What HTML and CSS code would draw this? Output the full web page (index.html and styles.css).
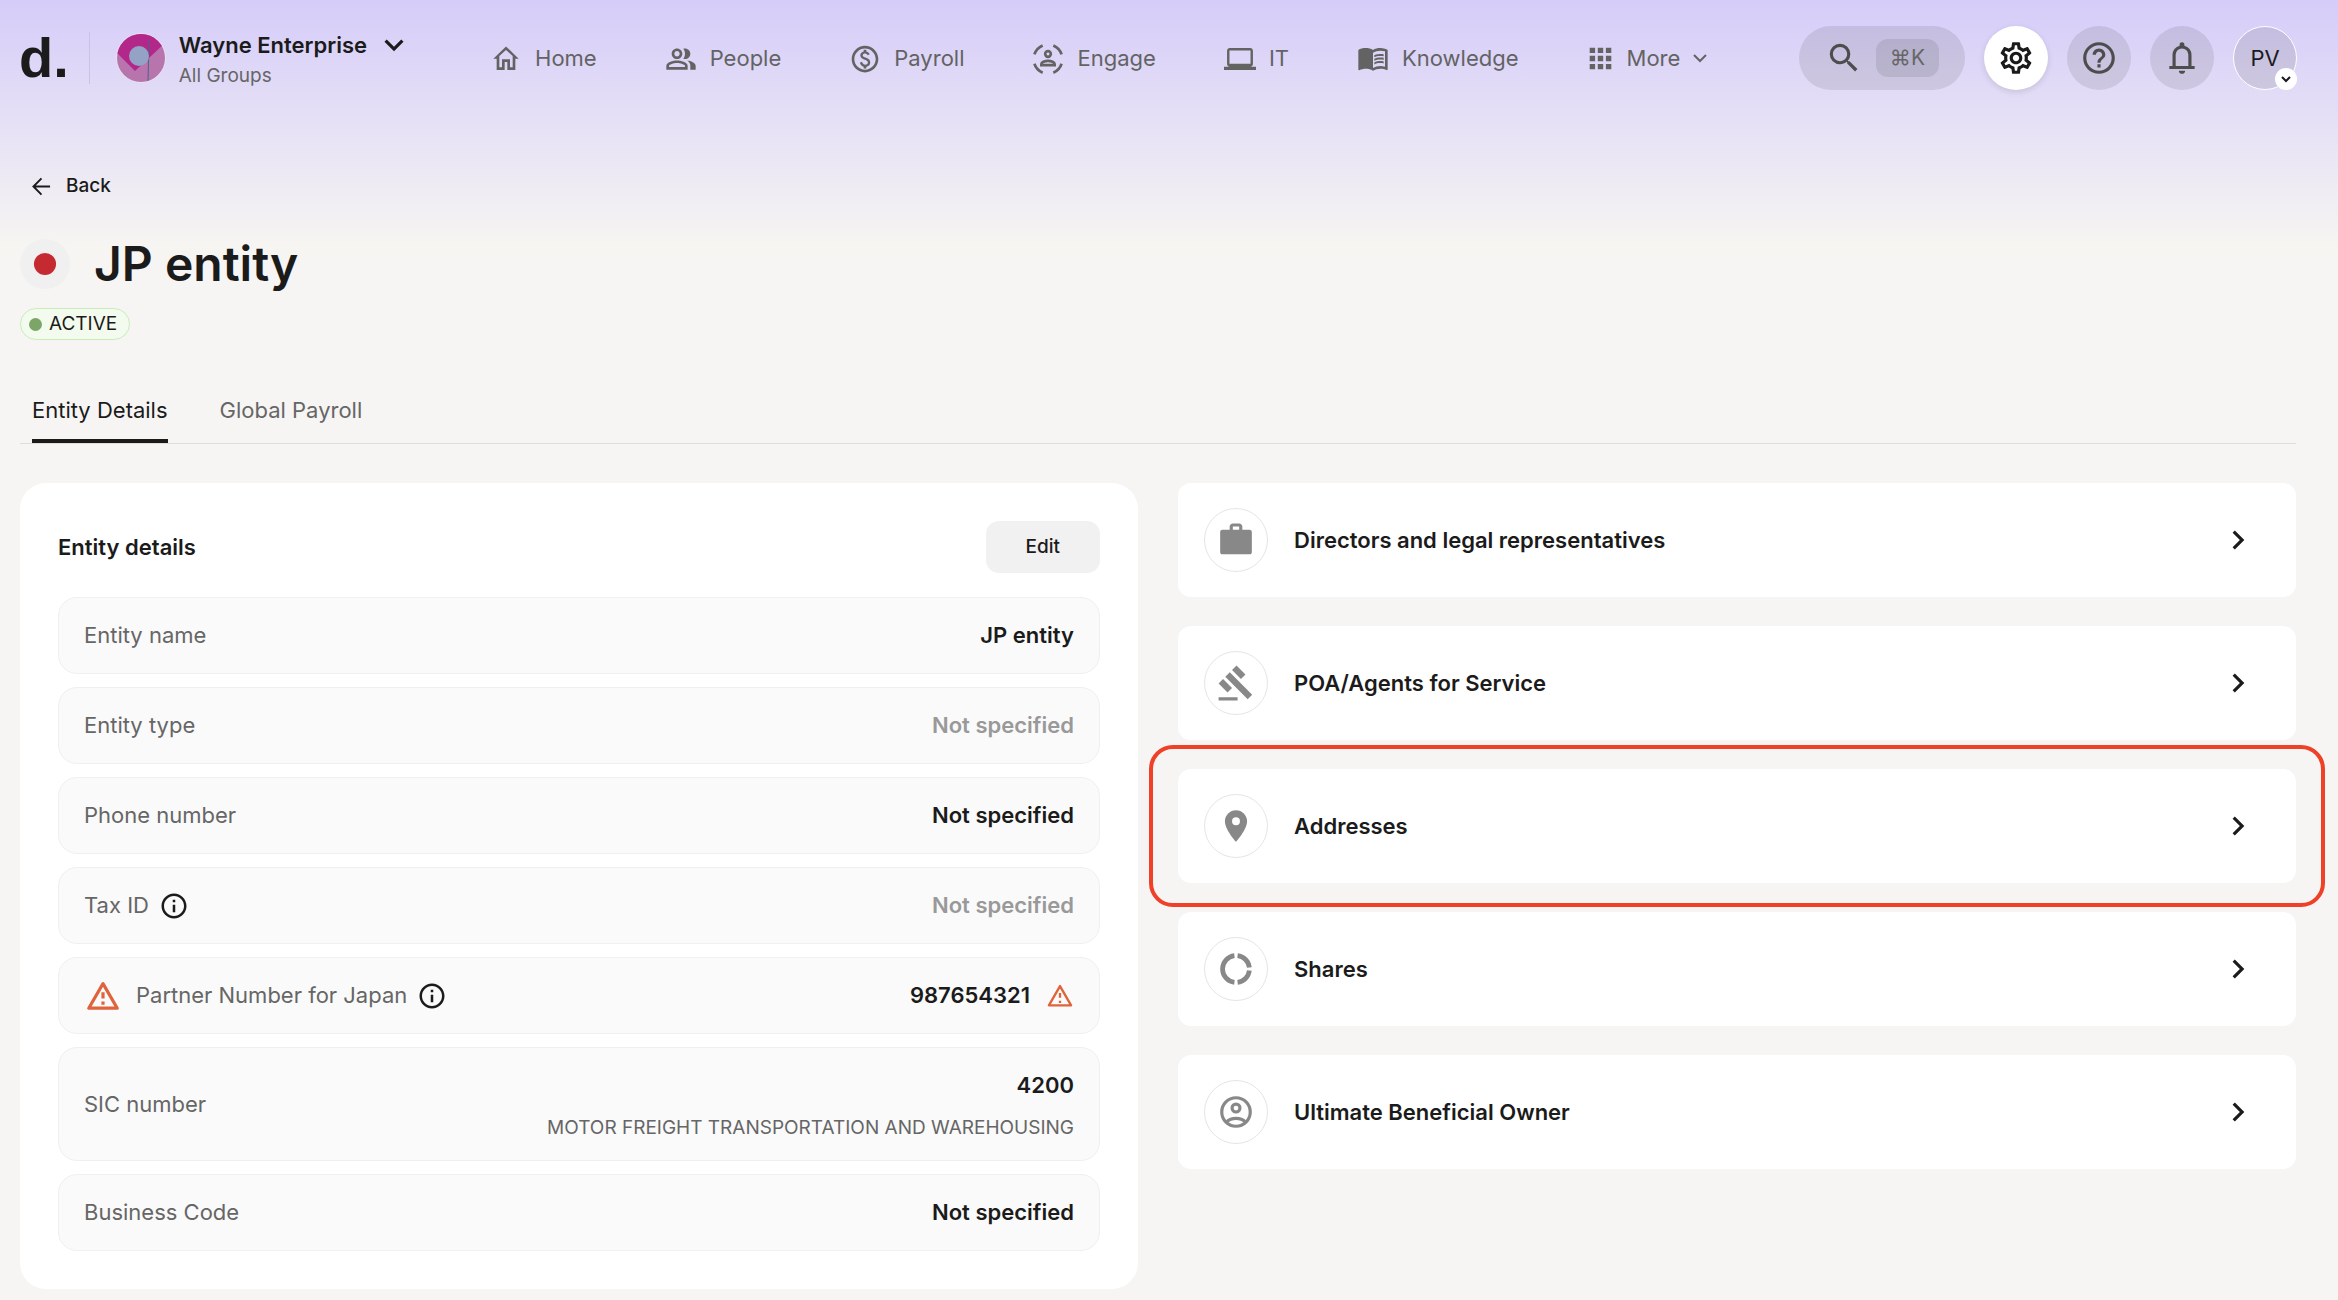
FILE: index.html
```html
<!DOCTYPE html>
<html lang="en">
<head>
<meta charset="utf-8">
<meta name="viewport" content="width=device-width, initial-scale=1">
<title>JP entity</title>
<link rel="stylesheet" href="styles.css">
</head>
<body>
<header class="topbar">
  <a class="logo" href="#">d.</a>
  <button class="org" type="button">
    <svg class="org-avatar" viewBox="0 0 50 50" aria-hidden="true">
      <clipPath id="disc"><circle cx="25" cy="25" r="24"/></clipPath>
      <circle cx="25" cy="25" r="25" fill="#e6e0f0"/>
      <g clip-path="url(#disc)">
        <path fill="#b774ad" d="M0 0h50v50H0z"/>
        <path fill="#b3278b" d="M0 0h50v9L19 38 0 19z"/>
        <path stroke="#4c6585" d="M33 7l-1 42"/>
        <circle cx="23" cy="23" r="10" fill="#93a2c5"/>
      </g>
    </svg>
    <span class="org-text">
      <span class="org-name">Wayne Enterprise</span>
      <span class="org-group">All Groups</span>
    </span>
    <svg class="icon-lg org-chevron" viewBox="0 0 24 24" aria-hidden="true"><path d="M7.41 8.59 12 13.17l4.59-4.58L18 10l-6 6-6-6z"/></svg>
  </button>

  <nav class="nav" aria-label="Main">
    <a class="nav-item" href="#"><svg class="icon" viewBox="0 0 24 24" aria-hidden="true"><path d="m12 6 5 4.5V19h-2v-6H9v6H7v-8.500l5-4.500M12 3.300 2.500 12.500h2.500V21h6v-6h2v6h6v-8.500h2.500z"/></svg>Home</a>
    <a class="nav-item" href="#"><svg class="icon" viewBox="0 0 24 24" aria-hidden="true"><path d="M16.67 13.93C18.04 14.86 19 16.12 19 17.8v3h4v-3c0-2.180-3.570-3.470-6.330-3.870zM15 12.800c2.210 0 4-1.790 4-4s-1.790-4-4-4c-.47 0-.91.1-1.330.24C14.500 6.070 15 7.380 15 8.800s-.5 2.730-1.330 3.760c.42.14.86.24 1.330.24zM9 12.800c2.210 0 4-1.790 4-4s-1.790-4-4-4-4 1.790-4 4 1.790 4 4 4zm0-6c1.100 0 2 .9 2 2s-.9 2-2 2-2-.9-2-2 .9-2 2-2zM9 13.800c-2.670 0-8 1.340-8 4v3h16v-3c0-2.660-5.330-4-8-4zm6 5H3v-.99C3.200 17.090 6.300 15.800 9 15.800s5.800 1.290 6 2v1z"/></svg>People</a>
    <a class="nav-item" href="#"><svg class="icon" viewBox="0 0 24 24" aria-hidden="true"><path transform="translate(0 .8)" d="M12 2C6.480 2 2 6.480 2 12s4.480 10 10 10 10-4.480 10-10S17.520 2 12 2zm0 18c-4.410 0-8-3.590-8-8s3.590-8 8-8 8 3.590 8 8-3.590 8-8 8zm.89-8.900c-1.780-.59-2.640-.96-2.640-1.900 0-1.020 1.110-1.390 1.810-1.390 1.310 0 1.790.99 1.900 1.340l1.580-.67c-.15-.45-.82-1.920-2.540-2.240V5h-2v1.260c-2.480.56-2.490 2.860-2.490 2.960 0 2.270 2.250 2.910 3.350 3.310 1.580.56 2.280 1.070 2.280 2.030 0 1.130-1.050 1.610-1.980 1.610-1.820 0-2.340-1.870-2.400-2.090l-1.660.67c.63 2.190 2.280 2.780 2.900 2.960V19h2v-1.240c.4-.09 2.900-.59 2.900-3.220 0-1.390-.61-2.610-3.010-3.440z"/></svg>Payroll</a>
    <a class="nav-item" href="#"><svg class="icon line" viewBox="0 0 24 24" aria-hidden="true"><g transform="translate(0 .8)"><path d="M1.800 8.500A11 11 0 0 1 8 1.800M16 1.800a11 11 0 0 1 6.200 6.700M22.200 15.500A11 11 0 0 1 16 22.200M8 22.200a11 11 0 0 1-6.200-6.700"/><circle cx="12" cy="8.200" r="2.100"/><path d="M7 16.500v-.7c0-1.500 2.600-2.500 5-2.500s5 1 5 2.500v.7z"/></g></svg>Engage</a>
    <a class="nav-item" href="#"><svg class="icon" viewBox="0 0 24 24" aria-hidden="true"><path d="M4.300 4.500h15.400c1.100 0 2 .9 2 2v10c0 1.100-.9 2-2 2H24V21H0v-2.500h4.300c-1.100 0-2-.9-2-2v-10c0-1.100.9-2 2-2zM4.100 6.300v10h15.800v-10z"/></svg>IT</a>
    <a class="nav-item" href="#"><svg class="icon" viewBox="0 0 24 24" aria-hidden="true"><path fill-rule="evenodd" d="M21 5c-1.110-.35-2.330-.5-3.500-.5-1.950 0-4.050.4-5.500 1.500-1.450-1.100-3.550-1.500-5.500-1.500S2.450 4.900 1 6v14.650c0 .25.25.5.5.5.1 0 .15-.05.25-.05C3.100 20.450 5.050 20 6.500 20c1.950 0 4.050.4 5.500 1.500 1.350-.85 3.800-1.500 5.500-1.500 1.650 0 3.350.3 4.750 1.050.1.05.15.05.25.05.25 0 .5-.25.5-.5V6c-.6-.45-1.250-.75-2-1zm0 13.500c-1.100-.35-2.300-.5-3.500-.5-1.700 0-4.150.65-5.500 1.500V8c1.350-.85 3.800-1.500 5.500-1.500 1.200 0 2.400.15 3.500.5v11.500z"/><path d="M17.500 10.500c.88 0 1.730.09 2.500.26V9.240c-.79-.15-1.640-.24-2.500-.24-1.700 0-3.240.29-4.500.83v1.660c1.130-.64 2.700-.99 4.500-.99zM13 12.490v1.660c1.130-.64 2.700-.99 4.500-.99.88 0 1.730.09 2.500.26V11.900c-.79-.15-1.640-.24-2.500-.24-1.700 0-3.240.3-4.500.83zM17.500 14.330c-1.700 0-3.240.29-4.500.83v1.660c1.130-.64 2.700-.99 4.500-.99.88 0 1.730.09 2.500.26v-1.520c-.79-.16-1.640-.24-2.500-.24z"/></svg>Knowledge</a>
    <button class="nav-item" type="button"><svg class="more-grid" viewBox="2 2 20 20" aria-hidden="true"><path d="M4 4h4v4H4zM10 4h4v4h-4zM16 4h4v4h-4zM4 10h4v4H4zM10 10h4v4h-4zM16 10h4v4h-4zM4 16h4v4H4zM10 16h4v4h-4zM16 16h4v4h-4z"/></svg>More<svg class="more-chevron line" viewBox="0 0 14 14" aria-hidden="true"><path d="m1 4 6 6 6-6"/></svg></button>
  </nav>

  <div class="tools">
    <button class="search" type="button" aria-label="Search"><svg class="icon-lg" viewBox="0 0 24 24" aria-hidden="true"><path d="M15.500 14h-.79l-.28-.27A6.470 6.470 0 0 0 16 9.500 6.500 6.500 0 1 0 9.500 16c1.610 0 3.090-.59 4.230-1.570l.27.28v.79l5 4.990L20.490 19zm-6 0C7.010 14 5 11.990 5 9.500S7.010 5 9.500 5 14 7.010 14 9.500 11.990 14 9.500 14z"/></svg><kbd class="shortcut">⌘K</kbd></button>
    <button class="tool active" type="button" aria-label="Settings"><svg class="icon-lg" viewBox="0 0 24 24" aria-hidden="true"><path d="M19.430 12.980c.04-.32.07-.64.07-.98s-.03-.66-.07-.98l2.110-1.650c.19-.15.24-.42.12-.64l-2-3.460c-.09-.16-.26-.25-.44-.25-.06 0-.12.01-.17.03l-2.490 1c-.52-.4-1.080-.73-1.690-.98l-.38-2.650C14.460 2.180 14.250 2 14 2h-4c-.25 0-.46.18-.49.42l-.38 2.650c-.61.25-1.170.59-1.690.98l-2.490-1c-.06-.02-.12-.03-.18-.03-.17 0-.34.09-.43.25l-2 3.460c-.13.22-.07.49.12.64l2.110 1.650c-.04.32-.07.65-.07.98s.03.66.07.98l-2.110 1.650c-.19.15-.24.42-.12.64l2 3.460c.09.16.26.25.44.25.06 0 .12-.01.17-.03l2.490-1c.52.4 1.080.73 1.690.98l.38 2.650c.03.24.24.42.49.42h4c.25 0 .46-.18.49-.42l.38-2.650c.61-.25 1.170-.59 1.690-.98l2.490 1c.06.02.12.03.18.03.17 0 .34-.09.43-.25l2-3.460c.12-.22.07-.49-.12-.64l-2.110-1.650zm-1.980-1.710c.04.31.05.52.05.73 0 .21-.02.43-.05.73l-.14 1.130.89.7 1.080.84-.7 1.210-1.270-.51-1.040-.42-.9.68c-.43.32-.84.56-1.250.73l-1.060.43-.16 1.130-.2 1.350h-1.400l-.19-1.350-.16-1.130-1.060-.43c-.43-.18-.83-.41-1.230-.71l-.91-.7-1.060.43-1.270.51-.7-1.210 1.080-.84.89-.7-.14-1.130c-.03-.31-.05-.54-.05-.74s.02-.43.05-.73l.14-1.130-.89-.7-1.080-.84.7-1.210 1.270.51 1.040.42.9-.68c.43-.32.84-.56 1.250-.73l1.060-.43.16-1.130.2-1.350h1.390l.19 1.350.16 1.130 1.060.43c.43.18.83.41 1.230.71l.91.7 1.060-.43 1.270-.51.7 1.210-1.070.85-.89.7.14 1.130zM12 8c-2.210 0-4 1.790-4 4s1.790 4 4 4 4-1.790 4-4-1.790-4-4-4zm0 6c-1.100 0-2-.9-2-2s.9-2 2-2 2 .9 2 2-.9 2-2 2z"/></svg></button>
    <button class="tool" type="button" aria-label="Help"><svg class="icon-lg" viewBox="0 0 24 24" aria-hidden="true"><path d="M11 18h2v-2h-2v2zm1-16C6.480 2 2 6.480 2 12s4.480 10 10 10 10-4.480 10-10S17.520 2 12 2zm0 18c-4.410 0-8-3.590-8-8s3.590-8 8-8 8 3.590 8 8-3.590 8-8 8zm0-14c-2.210 0-4 1.790-4 4h2c0-1.100.9-2 2-2s2 .9 2 2c0 2-3 1.750-3 5h2c0-2.250 3-2.500 3-5 0-2.210-1.790-4-4-4z"/></svg></button>
    <button class="tool" type="button" aria-label="Notifications"><svg class="icon-lg" viewBox="0 0 24 24" aria-hidden="true"><path d="M4 19v-2h2v-7q0-2.075 1.250-3.687T10.500 4.200v-.7q0-.625.438-1.062T12 2t1.063.438T13.500 3.500v.7q2 .5 3.250 2.113T18 10v7h2v2zm8 3q-.825 0-1.412-.587T10 20h4q0 .825-.587 1.413T12 22m-4-5h8v-7q0-1.650-1.175-2.825T12 6 9.175 7.175 8 10z"/></svg></button>
    <button class="tool profile" type="button">PV<span class="profile-badge"><svg class="badge-chevron line" viewBox="0 0 14 14" aria-hidden="true"><path d="m3 5 4 4 4-4"/></svg></span></button>
  </div>
</header>

<main class="page">
  <a class="back" href="#"><svg class="back-arrow line" viewBox="0 0 20 20" aria-hidden="true"><path d="M19 10H2M10 1.500 1.500 10l8.500 8.500"/></svg>Back</a>

  <div class="title">
    <svg class="flag" viewBox="0 0 52 52" role="img" aria-label="Japan"><circle cx="26" cy="26" r="26" fill="#f0f0f0"/><circle cx="26" cy="26" r="11.500" fill="#c62a31"/></svg>
    <h1>JP entity</h1>
  </div>
  <span class="status">ACTIVE</span>

  <nav class="tabs" aria-label="Entity">
    <a class="tab current" href="#" aria-current="page">Entity Details</a>
    <a class="tab" href="#">Global Payroll</a>
  </nav>

  <div class="columns">
    <section class="details">
      <div class="details-head">
        <h2>Entity details</h2>
        <button class="edit" type="button">Edit</button>
      </div>
      <dl class="rows">
        <div class="row"><dt>Entity name</dt><dd>JP entity</dd></div>
        <div class="row"><dt>Entity type</dt><dd class="empty">Not specified</dd></div>
        <div class="row"><dt>Phone number</dt><dd>Not specified</dd></div>
        <div class="row"><dt>Tax ID<svg class="info" viewBox="0 0 24 24" aria-hidden="true"><path d="M11 7h2v2h-2zm0 4h2v6h-2zm1-9C6.480 2 2 6.480 2 12s4.480 10 10 10 10-4.480 10-10S17.520 2 12 2zm0 18c-4.410 0-8-3.590-8-8s3.590-8 8-8 8 3.590 8 8-3.590 8-8 8z"/></svg></dt><dd class="empty">Not specified</dd></div>
        <div class="row"><dt><svg class="warn warn-lg icon-lg" viewBox="0 0 24 24" aria-hidden="true"><path d="M12 4.200 3 19.700h18z"/><path d="M12 9.700v3.800M12 15.500v2"/></svg>Partner Number for Japan<svg class="info" viewBox="0 0 24 24" aria-hidden="true"><path d="M11 7h2v2h-2zm0 4h2v6h-2zm1-9C6.480 2 2 6.480 2 12s4.480 10 10 10 10-4.480 10-10S17.520 2 12 2zm0 18c-4.410 0-8-3.590-8-8s3.590-8 8-8 8 3.590 8 8-3.590 8-8 8z"/></svg></dt><dd class="flagged">987654321<svg class="warn warn-sm" viewBox="0 0 24 24" aria-hidden="true"><path d="M12 3.500 2.500 20h19z"/><path d="M12 9.500v4M12 16v2"/></svg></dd></div>
        <div class="row"><dt>SIC number</dt><dd class="stacked">4200<small>MOTOR FREIGHT TRANSPORTATION AND WAREHOUSING</small></dd></div>
        <div class="row"><dt>Business Code</dt><dd>Not specified</dd></div>
      </dl>
    </section>

    <div class="links">
      <a class="link-card" href="#"><span class="disc"><svg class="icon-lg" viewBox="0 0 24 24" aria-hidden="true"><path d="M10 1.500h4c1.100 0 2 .9 2 2V5.500h4.500c1.100 0 1.500.6 1.500 1.500v12.500c0 1-.5 1.500-1.500 1.500h-17C2.500 21 2 20.500 2 19.500V7c0-.9.400-1.500 1.500-1.500H8v-2c0-1.100.9-2 2-2zm4 4v-2h-4v2z"/></svg></span>Directors and legal representatives<svg class="icon-lg go" viewBox="0 0 24 24" aria-hidden="true"><path d="M10 6 8.590 7.410 13.170 12l-4.580 4.590L10 18l6-6z"/></svg></a>
      <a class="link-card" href="#"><span class="disc"><svg class="icon-lg" viewBox="0 0 24 24" aria-hidden="true"><path d="M1 21h12v2H1zM5.245 8.070l2.830-2.827 14.140 14.142-2.828 2.828zM12.317 1l5.657 5.656-2.830 2.830-5.654-5.660zM3.825 9.485l5.657 5.657-2.828 2.828-5.657-5.657z"/></svg></span>POA/Agents for Service<svg class="icon-lg go" viewBox="0 0 24 24" aria-hidden="true"><path d="M10 6 8.590 7.410 13.170 12l-4.580 4.590L10 18l6-6z"/></svg></a>
      <a class="link-card highlighted" href="#"><span class="disc"><svg class="icon-lg" viewBox="0 0 24 24" aria-hidden="true"><path d="M12 2C8.130 2 5 5.130 5 9c0 5.250 7 13 7 13s7-7.750 7-13c0-3.870-3.130-7-7-7zm0 9.500a2.500 2.500 0 1 1 0-5 2.500 2.500 0 0 1 0 5z"/></svg></span>Addresses<svg class="icon-lg go" viewBox="0 0 24 24" aria-hidden="true"><path d="M10 6 8.590 7.410 13.170 12l-4.580 4.590L10 18l6-6z"/></svg></a>
      <a class="link-card" href="#"><span class="disc"><svg class="icon-lg" viewBox="0 0 24 24" aria-hidden="true"><g fill="none" stroke="currentColor" stroke-width="3"><path d="M11 3.560a8.500 8.500 0 0 0 0 16.880M13 3.560A8.500 8.500 0 0 1 20.440 11M20.440 13A8.500 8.500 0 0 1 13 20.440"/></g></svg></span>Shares<svg class="icon-lg go" viewBox="0 0 24 24" aria-hidden="true"><path d="M10 6 8.590 7.410 13.170 12l-4.580 4.590L10 18l6-6z"/></svg></a>
      <a class="link-card" href="#"><span class="disc"><svg class="icon-lg" viewBox="0 0 24 24" aria-hidden="true"><g fill="none" stroke="currentColor" stroke-width="2"><circle cx="12" cy="12" r="9"/><circle cx="12" cy="9.500" r="2.500"/><path d="M6 18.300c1.500-1.500 3.600-2.300 6-2.300s4.500.8 6 2.300"/></g></svg></span>Ultimate Beneficial Owner<svg class="icon-lg go" viewBox="0 0 24 24" aria-hidden="true"><path d="M10 6 8.590 7.410 13.170 12l-4.580 4.590L10 18l6-6z"/></svg></a>
    </div>
  </div>
</main>
</body>
</html>
```
FILE: styles.css
```css
* { box-sizing: border-box; }

body {
  margin: 0;
  min-height: 100vh;
  background: #f6f5f4 linear-gradient(#d5ccf9, #f6f5f2 245px, #f6f5f4 300px) no-repeat;
  color: #1b1b1b;
  font-family: Inter, "Liberation Sans", sans-serif;
  font-size: 22px;
  line-height: 32px;
}

a { color: inherit; text-decoration: none; }

button {
  padding: 0;
  border: 0;
  background: none;
  color: inherit;
  font: inherit;
  cursor: pointer;
}

svg { display: block; flex: none; fill: currentColor; }
.icon { width: 32px; height: 32px; }
.icon-lg { width: 38px; height: 38px; }
.line { fill: none; stroke: currentColor; stroke-width: 2; }

/* Top bar */
.topbar {
  display: flex;
  align-items: center;
  padding: 26px 41px 0 19px;
}

.logo {
  padding-right: 20px;
  border-right: 1px solid #cbc3e6;
  font-family: "Liberation Sans", Arial, sans-serif;
  font-size: 56px;
  font-weight: 700;
  line-height: 52px;
}

.org {
  display: flex;
  align-items: center;
  margin-left: 26px;
  text-align: left;
}
.org-avatar { width: 50px; height: 50px; margin-right: 13px; }
.org-text {
  display: flex;
  flex-direction: column;
  gap: 1px;
  padding-top: 3px;
}
.org-name { font-weight: 600; }
.org-group { color: #666; font-size: 19px; line-height: 28px; }
.org-chevron { align-self: flex-start; margin-left: 8px; }

.nav {
  display: flex;
  gap: 68px;
  margin-left: 77px;
  color: #636363;
}
.nav-item { display: flex; align-items: center; gap: 13px; }
.more-grid { width: 27px; height: 27px; }
.more-chevron { width: 14px; height: 14px; }

.tools { display: flex; gap: 19px; margin-left: auto; }
.search {
  display: flex;
  align-items: center;
  gap: 13px;
  height: 64px;
  padding: 0 26px;
  border-radius: 32px;
  background: rgba(27, 27, 27, .1);
  color: #4d4d4d;
}
.shortcut {
  padding: 3px 14px;
  border-radius: 12px;
  background: rgba(27, 27, 27, .1);
  color: #666;
  font-family: inherit;
  font-size: 21px;
}
.tool {
  display: grid;
  place-items: center;
  width: 64px;
  height: 64px;
  border-radius: 50%;
  background: rgba(27, 27, 27, .1);
  color: #4d4d4d;
}
.tool.active {
  background: #fff;
  box-shadow: 0 2px 6px rgba(0, 0, 0, .12);
  color: #1b1b1b;
}
.tool.profile {
  position: relative;
  border: 1px solid #fff;
  color: #1b1b1b;
}
.profile-badge {
  position: absolute;
  right: -1px;
  bottom: -1px;
  display: grid;
  place-items: center;
  width: 22px;
  height: 22px;
  border-radius: 50%;
  background: #fff;
}
.badge-chevron { width: 14px; height: 14px; }

/* Page heading */
.page { padding: 80px 42px 11px 20px; }

.back {
  display: flex;
  align-items: center;
  gap: 15px;
  width: max-content;
  padding-left: 12px;
  font-size: 19px;
  font-weight: 500;
}
.back-arrow { width: 19px; height: 19px; }

.title {
  display: flex;
  align-items: center;
  gap: 24px;
  margin-top: 30px;
}
.flag { width: 50px; height: 50px; }
h1 {
  margin: 0;
  font-size: 48px;
  font-weight: 600;
  line-height: 64px;
}

.status {
  display: flex;
  align-items: center;
  gap: 7px;
  width: max-content;
  margin-top: 12px;
  padding: 0 12px 0 8px;
  border: 1px solid #c9edb8;
  border-radius: 16px;
  background: #f3fbef;
  font-size: 19px;
  line-height: 30px;
}
.status::before {
  content: "";
  width: 13px;
  height: 13px;
  border-radius: 50%;
  background: #7ba667;
}

.tabs {
  display: flex;
  gap: 52px;
  margin-top: 54px;
  padding-left: 12px;
  border-bottom: 1px solid #dedddc;
}
.tab { padding-bottom: 13px; border-bottom: 4px solid transparent; color: #666; }
.tab.current { border-color: #1b1b1b; color: #1b1b1b; }

/* Content */
.columns {
  display: grid;
  grid-template-columns: 1fr 1fr;
  align-items: start;
  gap: 40px;
  margin-top: 39px;
}

.details { padding: 38px; border-radius: 26px; background: #fff; }
.details-head {
  display: flex;
  align-items: center;
  justify-content: space-between;
}
h2 { margin: 0; font-size: 22px; font-weight: 600; line-height: 32px; }
.edit {
  padding: 10px 40px;
  border-radius: 13px;
  background: #f1f1f1;
  font-size: 19px;
  font-weight: 500;
}

.rows { display: grid; gap: 13px; margin: 24px 0 0; }
.row {
  display: flex;
  align-items: center;
  justify-content: space-between;
  padding: 20px 25px;
  border: 1px solid #f0f0f0;
  border-radius: 19px;
  background: #fafafa;
  line-height: 35px;
}
dt { display: flex; align-items: center; gap: 10px; height: 35px; color: #666; }
dd { margin: 0; font-weight: 600; }
.empty { color: #999; }
.info { width: 30px; height: 30px; color: #1b1b1b; }
.flagged { display: flex; align-items: center; gap: 16px; }
.stacked { display: grid; gap: 12px; text-align: right; }
.stacked small { color: #666; font-size: 19px; font-weight: 400; line-height: 25px; }

.warn {
  fill: none;
  stroke: #df643c;
  stroke-width: 2;
  stroke-linejoin: round;
}
.warn-lg { margin-right: 4px; }
.warn-sm { width: 28px; height: 28px; }

.links { display: grid; gap: 29px; }
.link-card {
  position: relative;
  display: flex;
  align-items: center;
  padding: 25px 39px 25px 26px;
  border-radius: 13px;
  background: #fff;
  font-weight: 600;
}
.disc {
  display: grid;
  place-items: center;
  width: 64px;
  height: 64px;
  margin-right: 26px;
  border: 1px solid #e5e5e5;
  border-radius: 50%;
  color: #888;
}
.go { margin-left: auto; }

.highlighted::after {
  content: "";
  position: absolute;
  inset: -24px -29px;
  border: 4px solid #ee4127;
  border-radius: 24px;
  pointer-events: none;
}
```
